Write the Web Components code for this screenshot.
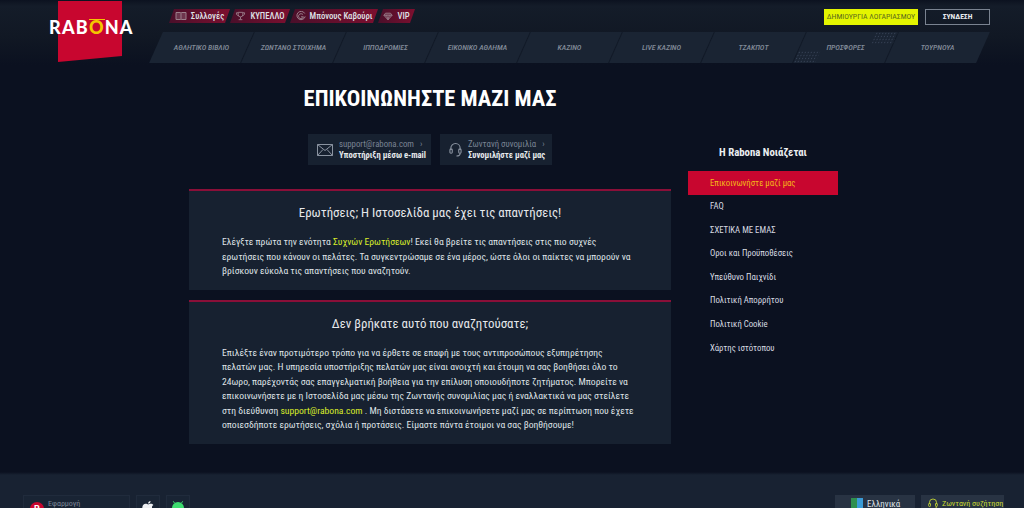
<!DOCTYPE html>
<html lang="el">
<head>
<meta charset="utf-8">
<title>Rabona</title>
<style>
html, body { margin: 0; height: 508px; overflow: hidden; background: #0b1120; }
body { font-family: Roboto, "Liberation Sans", sans-serif; font-stretch: 75%; color: #e3e6ea; }
</style>
</head>
<body>

<rb-page>
  <rb-header slot="header">
    <rb-tab slot="tabs" w="61" icon="book">Συλλογές</rb-tab>
    <rb-tab slot="tabs" w="60" icon="cup">ΚΥΠΕΛΛΟ</rb-tab>
    <rb-tab slot="tabs" w="88" icon="spin">Μπόνους Καβούρι</rb-tab>
    <rb-tab slot="tabs" w="37" icon="gem">VIP</rb-tab>
    <rb-nav-item slot="nav">ΑΘΛΗΤΙΚΟ ΒΙΒΛΙΟ</rb-nav-item>
    <rb-nav-item slot="nav">ΖΩΝΤΑΝΟ ΣΤΟΙΧΗΜΑ</rb-nav-item>
    <rb-nav-item slot="nav">ΙΠΠΟΔΡΟΜΙΕΣ</rb-nav-item>
    <rb-nav-item slot="nav">ΕΙΚΟΝΙΚΟ ΑΘΛΗΜΑ</rb-nav-item>
    <rb-nav-item slot="nav">ΚΑΖΙΝΟ</rb-nav-item>
    <rb-nav-item slot="nav">LIVE ΚΑΖΙΝΟ</rb-nav-item>
    <rb-nav-item slot="nav">ΤΖΑΚΠΟΤ</rb-nav-item>
    <rb-nav-item slot="nav" dotted>ΠΡΟΣΦΟΡΕΣ</rb-nav-item>
    <rb-nav-item slot="nav">ΤΟΥΡΝΟΥΑ</rb-nav-item>
  </rb-header>

  <rb-contact slot="contact" icon="mail" w="123">
    <span slot="top">support@rabona.com</span>
    <span slot="bottom">Υποστήριξη μέσω e-mail</span>
  </rb-contact>
  <rb-contact slot="contact" icon="headset" w="112">
    <span slot="top">Ζωντανή συνομιλία</span>
    <span slot="bottom">Συνομιλήστε μαζί μας</span>
  </rb-contact>

  <rb-card slot="cards" heading="Ερωτήσεις; Η Ιστοσελίδα μας έχει τις απαντήσεις!">
    Ελέγξτε πρώτα την ενότητα <b>Συχνών Ερωτήσεων</b>! Εκεί θα βρείτε τις απαντήσεις στις πιο συχνές<br>
    ερωτήσεις που κάνουν οι πελάτες. Τα συγκεντρώσαμε σε ένα μέρος, ώστε όλοι οι παίκτες να μπορούν να<br>
    βρίσκουν εύκολα τις απαντήσεις που αναζητούν.
  </rb-card>
  <rb-card slot="cards" heading="Δεν βρήκατε αυτό που αναζητούσατε;">
    Επιλέξτε έναν προτιμότερο τρόπο για να έρθετε σε επαφή με τους αντιπροσώπους εξυπηρέτησης<br>
    πελατών μας. Η υπηρεσία υποστήριξης πελατών μας είναι ανοιχτή και έτοιμη να σας βοηθήσει όλο το<br>
    24ωρο, παρέχοντάς σας επαγγελματική βοήθεια για την επίλυση οποιουδήποτε ζητήματος. Μπορείτε να<br>
    επικοινωνήσετε με η Ιστοσελίδα μας μέσω της Ζωντανής συνομιλίας μας ή εναλλακτικά να μας στείλετε<br>
    στη διεύθυνση <b>support@rabona.com</b> . Μη διστάσετε να επικοινωνήσετε μαζί μας σε περίπτωση που έχετε<br>
    οποιεσδήποτε ερωτήσεις, σχόλια ή προτάσεις. Είμαστε πάντα έτοιμοι να σας βοηθήσουμε!
  </rb-card>

  <rb-side slot="side" heading="Η Rabona Νοιάζεται">
    <rb-side-link active>Επικοινωνήστε μαζί μας</rb-side-link>
    <rb-side-link>FAQ</rb-side-link>
    <rb-side-link>ΣΧΕΤΙΚΑ ΜΕ ΕΜΑΣ</rb-side-link>
    <rb-side-link>Οροι και Προϋποθέσεις</rb-side-link>
    <rb-side-link>Υπεύθυνο Παιχνίδι</rb-side-link>
    <rb-side-link>Πολιτική Απορρήτου</rb-side-link>
    <rb-side-link>Πολιτική Cookie</rb-side-link>
    <rb-side-link>Χάρτης ιστότοπου</rb-side-link>
  </rb-side>

  <rb-footer slot="footer"></rb-footer>
</rb-page>

<script>
// Icons shared by the tabs, contact boxes and footer
const icons = {
    book: '<svg viewBox="0 0 12 10" width="12" height="10" fill="currentColor" fill-opacity=".35" stroke="currentColor"><path d="M1 1.5h4.5l.5.5.5-.5H11v7H6.5L6 9l-.5-.5H1z"/><path d="M6 2v6.500"/></svg>',
    cup: '<svg viewBox="0 0 12 10" width="11" height="10" fill="none" stroke="currentColor"><path d="M3.500 1h5v2.500a2.500 2.500 0 0 1-5 0zM3.500 1.500H1.500c0 2 .8 3 2.200 3.200M8.500 1.500h2c0 2-.8 3-2.200 3.200M6 6v2.500M4 9h4"/></svg>',
    spin: '<svg viewBox="0 0 12 12" width="10" height="10" fill="none" stroke="currentColor" stroke-width="1.200"><path d="M10.500 3A5 5 0 1 0 11 6.500"/><path d="M8.500 4.500A3 3 0 1 0 9 7H6"/></svg>',
    gem: '<svg viewBox="0 0 12 10" width="10" height="9" fill="currentColor" fill-opacity=".35" stroke="currentColor"><path d="M3 1h6l2 2.500L6 9 1 3.500zM1 3.500h10M4.500 3.500L6 9l1.500-5.500"/></svg>',
    mail: '<svg viewBox="0 0 16 12" width="16" height="12" fill="none" stroke="currentColor"><path d="M.5.500h15v11H.5zM.5.500L8 6.500l7.500-6M.5 11.500L6 5.500M15.500 11.500L10 5.500"/></svg>',
    headset: '<svg viewBox="0 0 14 16" width="13" height="16" fill="none" stroke="currentColor" stroke-width="1.200"><path d="M2 8V6a5 5 0 0 1 10 0v2"/><rect x="1" y="7" width="2.500" height="4.500" rx="1"/><rect x="10.500" y="7" width="2.500" height="4.500" rx="1"/><path d="M12 11.500c0 2-1.500 3-4 3"/></svg>'
};

class RbPage extends HTMLElement {
    constructor() {
        super();
        this.attachShadow({mode: 'open'});
        this.shadowRoot.innerHTML = `
            <style>
                :host { display: block; }
                main {
                    display: grid;
                    grid-template-columns: 482px 150px;
                    column-gap: 17px;
                    padding-left: 189px;
                    height: 410px;
                    align-content: start;
                    background: linear-gradient(#0b1120 407px, #182232 410px);
                }
                h1 {
                    grid-column: 1;
                    margin: 0;
                    height: 69px;
                    text-align: center;
                    font-size: 22.500px;
                    line-height: 66px;
                    font-weight: 700;
                    color: #fff;
                }
                .contact { grid-column: 1; display: flex; justify-content: center; gap: 9px; height: 55px; }
                .left { grid-column: 1; display: flex; flex-direction: column; gap: 10px; }
                .side { grid-column: 2; grid-row: 2 / span 2; }
            </style>
            <slot name="header"></slot>
            <main>
                <h1>ΕΠΙΚΟΙΝΩΝΗΣΤΕ ΜΑΖΙ ΜΑΣ</h1>
                <div class="contact"><slot name="contact"></slot></div>
                <div class="left"><slot name="cards"></slot></div>
                <div class="side"><slot name="side"></slot></div>
            </main>
            <slot name="footer"></slot>
        `;
    }
}

class RbHeader extends HTMLElement {
    constructor() {
        super();
        this.attachShadow({mode: 'open'});
        this.shadowRoot.innerHTML = `
            <style>
                :host {
                    display: grid;
                    grid-template-columns: 148px 842px;
                    height: 65px;
                    background: linear-gradient(#0c1220 0, #141c29 6px, #111824 55%, #0b1120 100%);
                }
                .right { display: flex; flex-direction: column; }
                .top { display: flex; justify-content: space-between; height: 32px; padding: 9px 0 0 21px; box-sizing: border-box; }
                .tabs { display: flex; height: 14px; }
                .auth { display: flex; gap: 7px; height: 16px; }
                a { display: block; line-height: 16px; text-align: center; box-sizing: border-box; white-space: nowrap; }
                .reg { width: 94px; font-size: 7.800px; background: #e4f500; color: #5d6c1e; }
                .log { width: 65px; font-size: 7.600px; border: 1px solid #7a8391; line-height: 14px; color: #e9ecef; font-weight: 700; }
                nav { display: flex; height: 31px; margin: 0 7px 0 8px; }
            </style>
            <rb-logo></rb-logo>
            <div class="right">
                <div class="top">
                    <div class="tabs"><slot name="tabs"></slot></div>
                    <div class="auth"><a class="reg">ΔΗΜΙΟΥΡΓΙΑ ΛΟΓΑΡΙΑΣΜΟΥ</a><a class="log">ΣΥΝΔΕΣΗ</a></div>
                </div>
                <nav><slot name="nav"></slot></nav>
            </div>
        `;
    }
}

class RbLogo extends HTMLElement {
    constructor() {
        super();
        this.attachShadow({mode: 'open'});
        this.shadowRoot.innerHTML = `
            <style>
                :host { display: grid; height: 63px; }
                .flag, .word { grid-area: 1 / 1; }
                .flag {
                    width: 64px;
                    height: 61px;
                    margin: 1px 0 0 58px;
                    background: #c8062f;
                    clip-path: polygon(0 0, 100% 0, 100% 90%, 0 100%);
                }
                .word {
                    position: relative;
                    margin: 17px 0 0 49px;
                    font: 900 18px/20px Lato, sans-serif;
                    letter-spacing: 1.200px;
                    color: #fff;
                    white-space: nowrap;
                }
                .o { color: #f4c600; border-top: 1.500px solid #f4c600; line-height: 14px; display: inline-block; height: 15px; }
            </style>
            <div class="flag"></div>
            <div class="word">RAB<span class="o">O</span>NA</div>
        `;
    }
}

class RbTab extends HTMLElement {
    constructor() {
        super();
        this.attachShadow({mode: 'open'});
        this.shadowRoot.innerHTML = `
            <style>
                :host { display: block; height: 14px; font-size: 8.700px; font-weight: 500; line-height: 14px; color: #dfe2e7; }
                .bg {
                    height: 100%;
                    display: flex;
                    align-items: center;
                    justify-content: center;
                    gap: 4px;
                    background: linear-gradient(90deg, #4a0f2a, #7c0f2f);
                    clip-path: polygon(5px 0, 100% 0, calc(100% - 5px) 100%, 0 100%);
                    white-space: nowrap;
                }
                .ic { display: flex; color: #9b7f8b; }
            </style>
            <div class="bg"><span class="ic">${icons[this.getAttribute('icon')] || ''}</span><slot></slot></div>
        `;
        this.style.width = this.getAttribute('w') + 'px';
    }
}

class RbNavItem extends HTMLElement {
    constructor() {
        super();
        this.attachShadow({mode: 'open'});
        this.shadowRoot.innerHTML = `
            <style>
                :host {
                    display: block;
                    position: relative;
                    flex: 1;
                    height: 31px;
                    transform: skewX(-24deg);
                    background: #1a2433;
                    border-right: 1px solid #111926;
                    box-sizing: border-box;
                }
                :host(:last-child) { border-right: 0; }
                :host([dotted])::before, :host([dotted])::after {
                    content: "";
                    position: absolute;
                    width: 22px;
                    height: 12px;
                    background-image: radial-gradient(#374256 .6px, transparent .7px);
                    background-size: 3px 3px;
                }
                :host([dotted])::before { left: 0; bottom: 0; }
                :host([dotted])::after { right: 0; top: 0; }
                span {
                    display: block;
                    transform: skewX(24deg);
                    text-align: center;
                    font-size: 7.800px;
                    font-weight: 500;
                    line-height: 31px;
                    font-style: italic;
                    color: #828b99;
                    white-space: nowrap;
                }
            </style>
            <span><slot></slot></span>
        `;
    }
}

class RbContact extends HTMLElement {
    constructor() {
        super();
        this.attachShadow({mode: 'open'});
        this.shadowRoot.innerHTML = `
            <style>
                :host {
                    display: flex;
                    align-items: center;
                    gap: 6px;
                    height: 31px;
                    padding-left: 9px;
                    box-sizing: border-box;
                    background: #172130;
                    white-space: nowrap;
                }
                .ic { display: flex; color: #8a93a0; }
                .top { font-size: 8.800px; line-height: 11px; color: #7b8494; }
                .top::after { content: "\\203A"; margin-left: 6px; }
                .bottom { font-size: 8.600px; line-height: 11px; font-weight: 700; color: #e6e9ec; }
            </style>
            <span class="ic">${icons[this.getAttribute('icon')]}</span>
            <div>
                <div class="top"><slot name="top"></slot></div>
                <div class="bottom"><slot name="bottom"></slot></div>
            </div>
        `;
        this.style.width = this.getAttribute('w') + 'px';
    }
}

class RbCard extends HTMLElement {
    constructor() {
        super();
        this.attachShadow({mode: 'open'});
        this.shadowRoot.innerHTML = `
            <style>
                :host {
                    display: block;
                    background: #172130;
                    border-top: 2px solid #8a0f38;
                    padding: 12px 20px 11px 33px;
                    box-sizing: border-box;
                }
                h2 { margin: 0 0 13px -13px; font-size: 12.900px; line-height: 19px; font-weight: 400; text-align: center; color: #e6e8eb; }
                p { margin: 0; font-size: 9.650px; font-weight: 450; line-height: 14.500px; color: #dfe2e6; white-space: nowrap; }
                ::slotted(b) { font-weight: 450; color: #d9ec2a; }
            </style>
            <h2>${this.getAttribute('heading')}</h2>
            <p><slot></slot></p>
        `;
    }
}

class RbSide extends HTMLElement {
    constructor() {
        super();
        this.attachShadow({mode: 'open'});
        this.shadowRoot.innerHTML = `
            <style>
                :host { display: block; }
                h3 { margin: 0; height: 37px; font-size: 10.800px; line-height: 37px; font-weight: 700; text-align: center; color: #eceef1; }
            </style>
            <h3>${this.getAttribute('heading')}</h3>
            <slot></slot>
        `;
    }
}

class RbSideLink extends HTMLElement {
    constructor() {
        super();
        this.attachShadow({mode: 'open'});
        this.shadowRoot.innerHTML = `
            <style>
                :host { display: block; height: 23.600px; padding-left: 22px; font-size: 8.750px; font-weight: 450; line-height: 23.600px; color: #d8dbe0; }
                :host([active]) { height: 24px; line-height: 24px; background: #c8062f; color: #f5b818; }
            </style>
            <slot></slot>
        `;
    }
}

class RbFooter extends HTMLElement {
    constructor() {
        super();
        this.attachShadow({mode: 'open'});
        this.shadowRoot.innerHTML = `
            <style>
                :host {
                    display: flex;
                    justify-content: space-between;
                    height: 33px;
                    padding: 20px 20px 0 23px;
                    box-sizing: border-box;
                    background: #182232;
                    font-size: 8px;
                }
                .group { display: flex; gap: 6px; }
                .box { height: 30px; display: flex; box-sizing: border-box; gap: 4px; white-space: nowrap; }
                .app { width: 107px; padding: 3px 0 0 6px; color: #7b8494; line-height: 10px; background: #192434; border: 1px solid #202b3c; }
                .dot { width: 14px; height: 14px; border-radius: 50%; background: #c8062f; color: #fff; font: 700 9px/14px Roboto, sans-serif; text-align: center; margin-top: 3px; }
                .store { width: 24px; justify-content: center; padding-top: 5px; background: #192434; border: 1px solid #202b3c; }
                .lang { width: 80px; padding: 3px 0 0 16px; color: #dfe2e6; line-height: 12px; font-size: 9px; background: #283343; }
                .flag { width: 12px; height: 10px; background: linear-gradient(90deg, #2f8f4e 50%, #3a9bd6 50%); }
                .chat { width: 83px; padding: 3px 0 0 7px; color: #c9dc32; line-height: 12px; background: #283343; }
            </style>
            <div class="group">
                <div class="box app"><span class="dot">R</span><span>Εφαρμογή</span></div>
                <div class="box store">
                    <svg width="12" height="14" viewBox="0 0 12 14" fill="#eef0f3"><path d="M8.500 0c.1 1.300-1 2.600-2.400 2.600C6 1.300 7.200.1 8.500 0zM6.200 3.400c.6 0 1.500-.7 2.700-.7 1 0 1.900.5 2.500 1.300-2.100 1.200-1.800 4.200.4 5-.6 1.600-1.800 3.800-3.200 3.800-.9 0-1.200-.5-2.200-.5s-1.400.5-2.200.5C2.600 12.800.3 9.600.3 6.800c0-2.600 1.700-4 3.300-4 1.100 0 2 .6 2.600.6z"/></svg>
                </div>
                <div class="box store">
                    <svg width="14" height="14" viewBox="0 0 14 14" fill="#3ddc6f"><path d="M1 7a6 6 0 0 1 12 0v7H1z"/><path d="M3.500 2L2.300.3M10.500 2L11.700.3" stroke="#3ddc6f"/></svg>
                </div>
            </div>
            <div class="group">
                <div class="box lang"><span class="flag"></span><span>Ελληνικά</span></div>
                <div class="box chat">${icons.headset.replace('width="13" height="16"', 'width="10" height="12"')}<span>Ζωντανή συζήτηση</span></div>
            </div>
        `;
    }
}

customElements.define('rb-page', RbPage);
customElements.define('rb-header', RbHeader);
customElements.define('rb-logo', RbLogo);
customElements.define('rb-tab', RbTab);
customElements.define('rb-nav-item', RbNavItem);
customElements.define('rb-contact', RbContact);
customElements.define('rb-card', RbCard);
customElements.define('rb-side', RbSide);
customElements.define('rb-side-link', RbSideLink);
customElements.define('rb-footer', RbFooter);
</script>
</body>
</html>
